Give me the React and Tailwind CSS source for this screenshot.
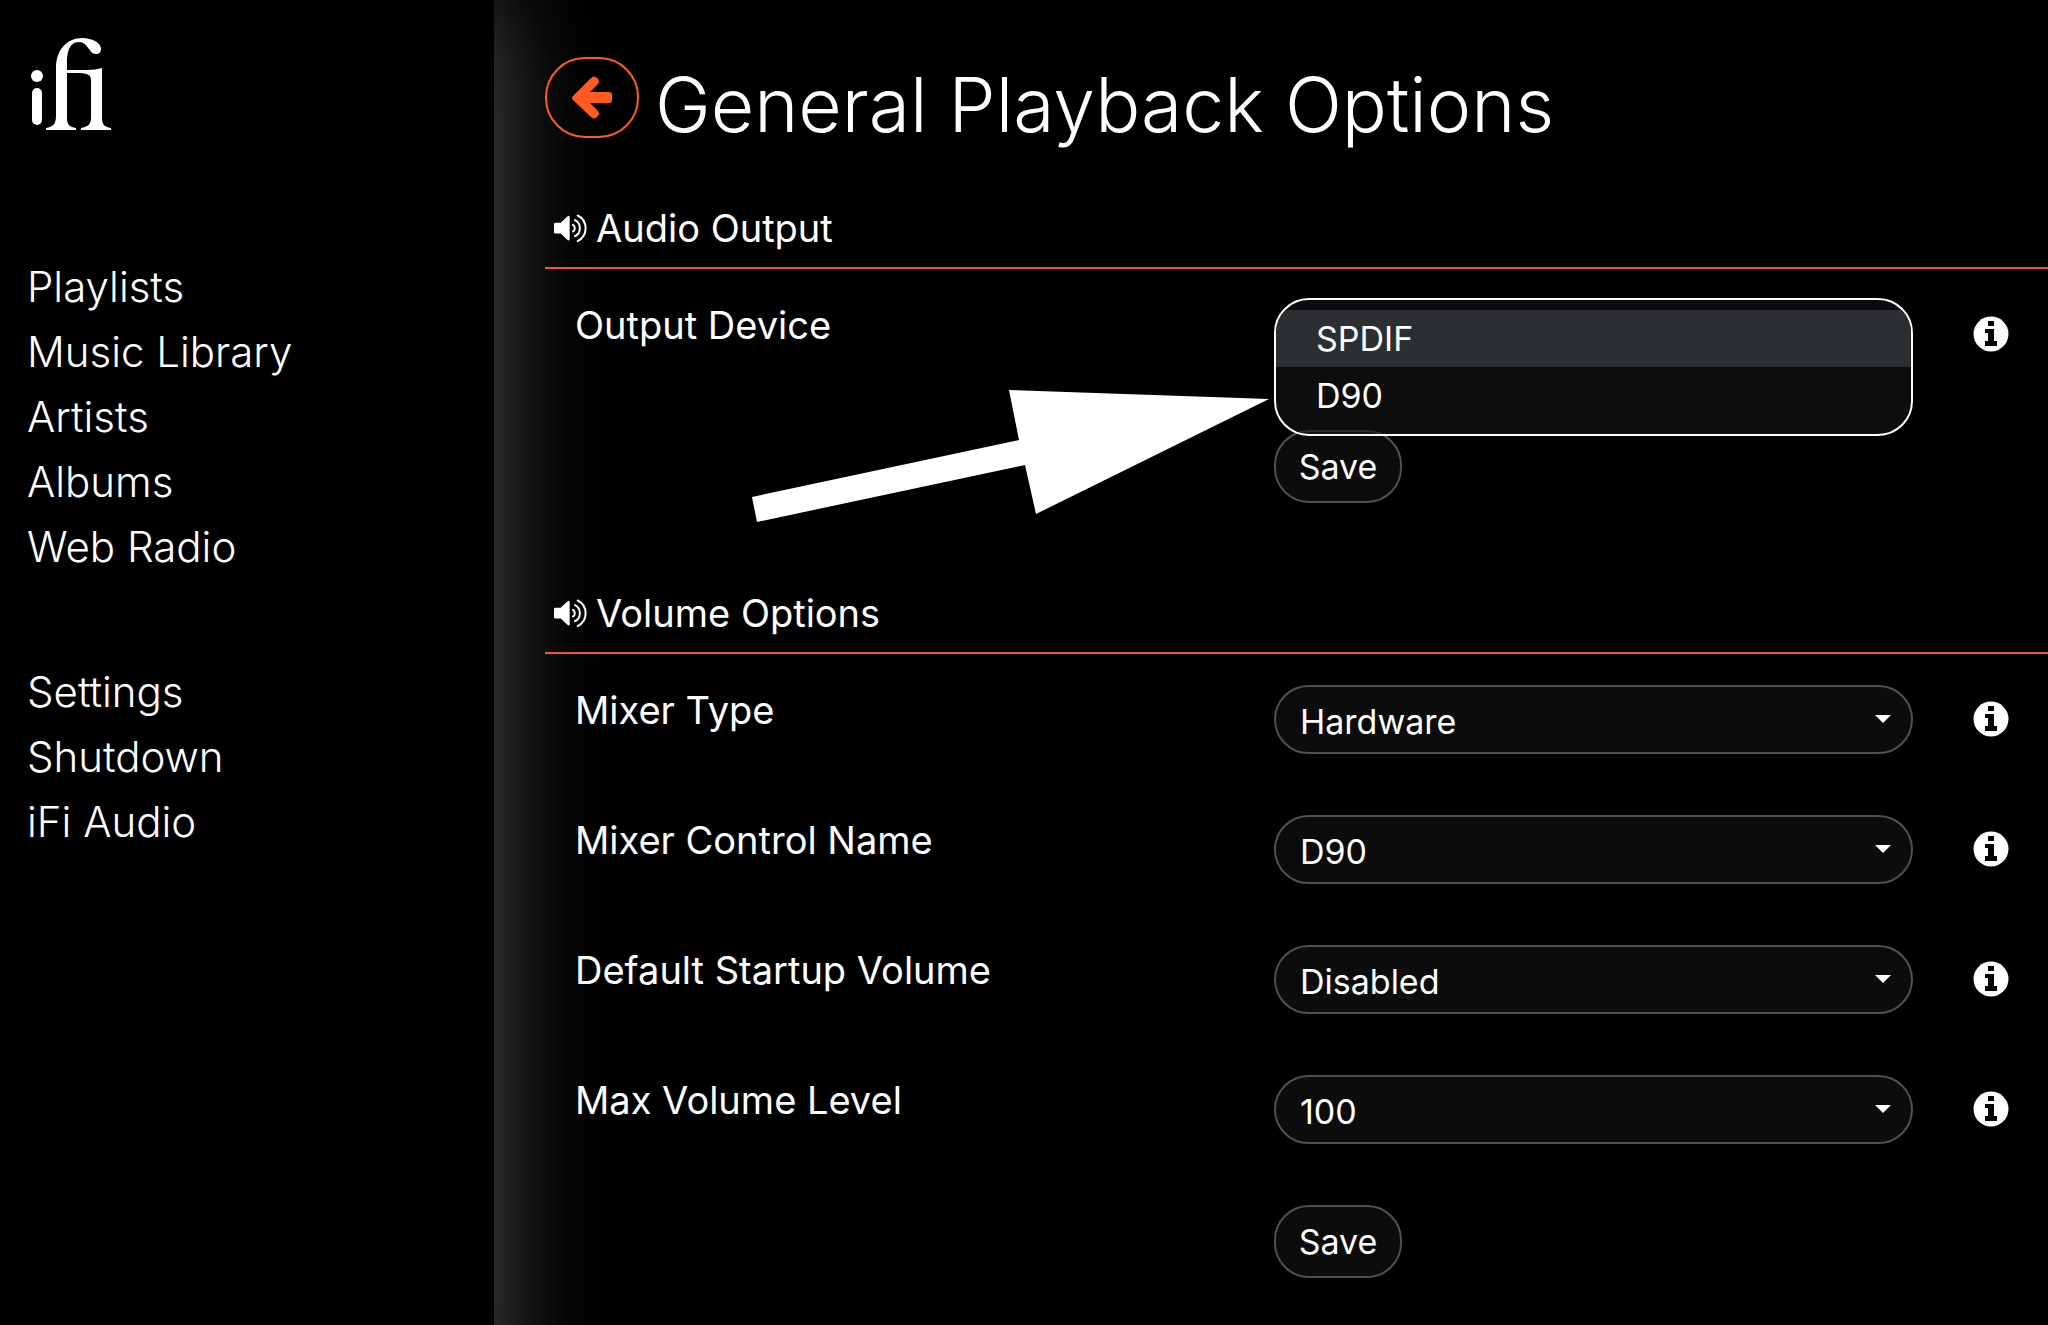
import { useState } from "react";

const LIBRARY_LINKS = ["Playlists", "Music Library", "Artists", "Albums", "Web Radio"];
const SYSTEM_LINKS = ["Settings", "Shutdown", "iFi Audio"];

const OUTPUT_DEVICES = ["SPDIF", "D90"];

const VOLUME_FIELDS = [
  { id: "mixer-type", label: "Mixer Type", options: ["Hardware", "Software", "None"] },
  { id: "mixer-control", label: "Mixer Control Name", options: ["D90"] },
  { id: "startup-volume", label: "Default Startup Volume", options: ["Disabled", "25", "50", "75"] },
  { id: "max-volume", label: "Max Volume Level", options: ["100", "90", "80", "70"] },
];

function Logo() {
  return (
    <svg viewBox="0 0 82 94" className="w-[82px] h-[94px]" fill="white" aria-label="iFi">
      <circle cx="6" cy="38" r="6" />
      <rect x="1" y="50" width="10" height="37" rx="5" />
      <path d="M15 90C22 89 25 86 25 78V30C25 12 36 0 51 0C62 0 70 5 70 11C70 14 68 16 65 16C58 16 57 4 48 4C38 4 36 15 36 25V32H55C62 32 67 31 71 30L71 80C71 86 73 89 80 90V92H50V90C57 89 60 86 60 80V43C60 37 58 36 50 35H36V80C36 86 38 89 45 90V92H15Z" />
    </svg>
  );
}

function ArrowIcon() {
  return (
    <svg viewBox="0 0 40 43" className="w-10 h-[43px]" fill="currentColor">
      <path d="M1 20L19 2Q22 -1 25 2L26 3Q28 6 26 8L18 16H37Q40 16 40 19V24Q40 27 37 27H18L26 35Q28 38 26 40L25 41Q22 44 19 41L1 24Q-1 22 1 20Z" />
    </svg>
  );
}

function SpeakerIcon() {
  return (
    <svg viewBox="0 0 102 86" className="w-[34px] h-[29px]" fill="none" stroke="currentColor" strokeWidth="6" strokeLinecap="round">
      <path stroke="none" fill="currentColor" d="M4 26H20L40 7Q47 2 47 9V75Q47 82 40 77L20 58H4Q0 58 0 54V30Q0 26 4 26Z" />
      <path d="M57 32A12 12 0 0 1 57 52M63 18A27 27 0 0 1 63 66M71 4A43 43 0 0 1 71 81" />
    </svg>
  );
}

function InfoIcon() {
  return (
    <svg viewBox="0 0 36 36" className="w-9 h-9">
      <circle cx="18" cy="18" r="17.5" fill="white" />
      <path fill="black" d="M15 5h6v5h-6zM12 13h9v12h3v5H12v-5h3v-8h-3z" />
    </svg>
  );
}

function NavList({ items }) {
  return (
    <ul>
      {items.map((item) => (
        <li key={item}>
          <a href="#" className="block text-[42px] leading-[65px] font-light hover:text-[#ff5a1f]">{item}</a>
        </li>
      ))}
    </ul>
  );
}

function SectionTitle({ children }) {
  return (
    <h2 className="flex items-center gap-2 h-20 pl-[9px] border-b-2 border-[#f05a20] text-[38px]">
      <SpeakerIcon />
      {children}
    </h2>
  );
}

function Row({ label, htmlFor, children }) {
  return (
    <div className="flex items-start h-[130px] pl-[30px] pr-[39px]">
      <div className="flex-1 text-[38px] leading-[50px]">
        {label && <label htmlFor={htmlFor}>{label}</label>}
      </div>
      <div className="w-[639px] shrink-0">{children}</div>
      <div className="w-[96px] flex justify-end pt-4">
        {label && (
          <button type="button" aria-label={`About ${label}`}>
            <InfoIcon />
          </button>
        )}
      </div>
    </div>
  );
}

function SelectBox({ id, options }) {
  return (
    <div className="relative">
      <select id={id} className="appearance-none block w-full h-[69px] pl-6 pr-16 pt-1 rounded-[35px] border-2 border-[#505050] bg-[#0c0c0c] text-[34px]">
        {options.map((o) => <option key={o}>{o}</option>)}
      </select>
      <svg viewBox="0 0 16 8" className="absolute right-[22px] top-[30px] w-4 h-2 pointer-events-none" fill="white">
        <path d="M0 0h16L8 8z" />
      </svg>
    </div>
  );
}

function DeviceMenu() {
  const [device, setDevice] = useState("SPDIF");

  return (
    <div id="output-device" role="listbox" aria-label="Output Device" className="relative z-10 h-[138px] -mt-[2px] pt-[10px] rounded-[35px] border-2 border-white bg-[#151515]/60 overflow-hidden">
      {OUTPUT_DEVICES.map((d) => (
        <button
          key={d}
          type="button"
          role="option"
          aria-selected={d === device}
          onClick={() => setDevice(d)}
          className="block w-full h-[57px] pl-10 text-left text-[34px] aria-selected:bg-[#2b2f32]"
        >
          {d}
        </button>
      ))}
    </div>
  );
}

function SaveButton() {
  return (
    <button type="submit" className="w-32 h-[73px] rounded-[35px] border-2 border-[#505050] bg-[#0c0c0c] text-[34px]">Save</button>
  );
}

export default function App() {
  return (
    <div className="flex min-h-screen overflow-hidden bg-black text-white font-['Inter',sans-serif]">
      {/* runs past the bottom edge so its glow only fades at the top */}
      <aside className="w-[494px] shrink-0 -mb-24 bg-black pl-[27px] pt-[38px] shadow-[0_0_100px_#525252]">
        <a href="#" className="block pl-1"><Logo /></a>
        <nav className="flex flex-col gap-20 pt-[122px]">
          <NavList items={LIBRARY_LINKS} />
          <NavList items={SYSTEM_LINKS} />
        </nav>
      </aside>

      <main className="relative flex-1 min-w-0 pl-[51px] pt-[57px]">
        <header className="flex items-start gap-4 h-[132px]">
          <button type="button" aria-label="Back" className="flex items-center justify-center w-[94px] h-[81px] rounded-[40px] border-2 border-[#ff5a1f] text-[#ff5a1f]">
            <ArrowIcon />
          </button>
          <h1 className="text-[75px] leading-[96px] font-light">General Playback Options</h1>
        </header>

        <form onSubmit={(e) => e.preventDefault()}>
          <section className="h-[385px]">
            <SectionTitle>Audio Output</SectionTitle>
            <div className="pt-[31px]">
              <Row label="Output Device" htmlFor="output-device"><DeviceMenu /></Row>
              <Row><SaveButton /></Row>
            </div>
          </section>
        </form>

        <form onSubmit={(e) => e.preventDefault()}>
          <SectionTitle>Volume Options</SectionTitle>
          <div className="pt-[31px]">
            {VOLUME_FIELDS.map((f) => (
              <Row key={f.id} label={f.label} htmlFor={f.id}>
                <SelectBox id={f.id} options={f.options} />
              </Row>
            ))}
            <div className="-mb-10"><Row><SaveButton /></Row></div>
          </div>
        </form>

        {/* pointer towards the D90 entry */}
        <svg viewBox="0 0 517 132" className="absolute left-[258px] top-[390px] w-[517px] h-[132px] pointer-events-none" fill="white">
          <path d="M0 107L267 50L257 0L517 9L284 124L273 75L5 132Z" />
        </svg>
      </main>
    </div>
  );
}
